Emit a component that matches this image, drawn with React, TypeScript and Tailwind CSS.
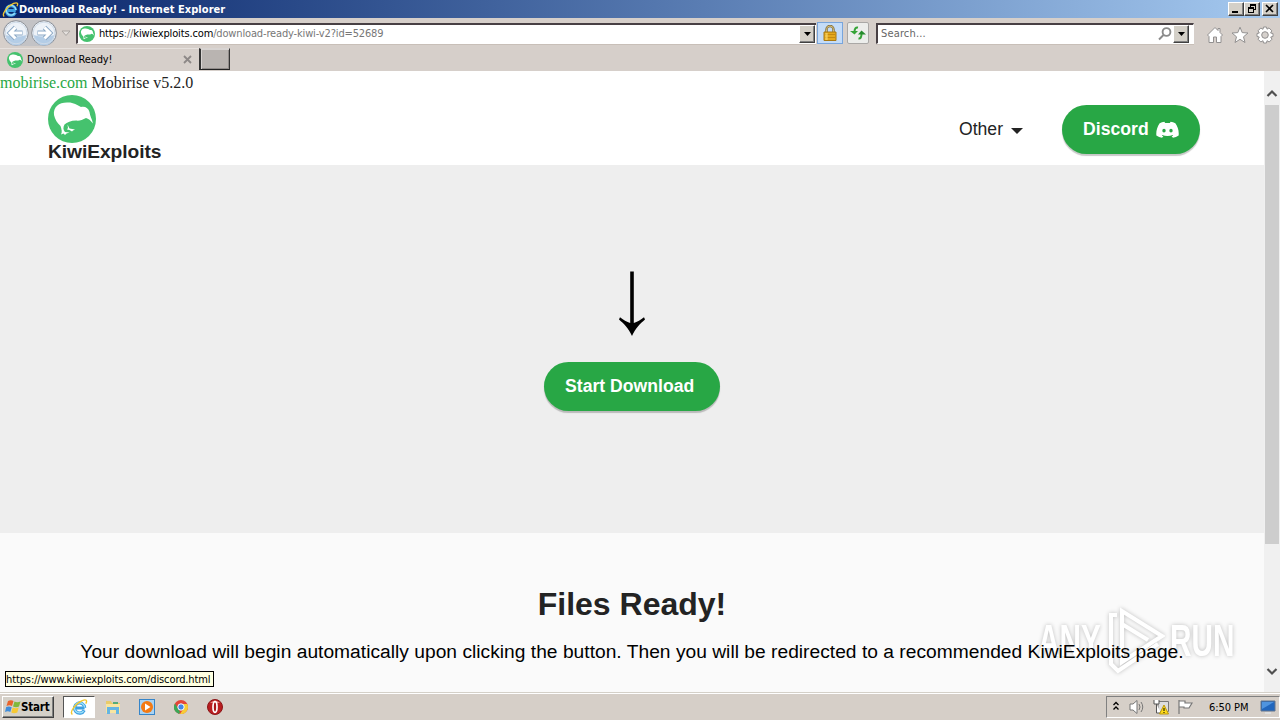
import React from "react";

const ui = "font-['DejaVu_Sans_Condensed','DejaVu_Sans',sans-serif]";

function IeLogo({ className }: { className: string }) {
  return (
    <svg className={className} viewBox="0 0 18 18" fill="none">
      <path d="M14.600 10H5M14.200 12.300A5.100 5.100 0 1 1 14.700 9.800" stroke="#3c9fe0" strokeWidth="3.200" />
      <path d="M13.600 13A5.100 5.100 0 1 1 14.700 9.500" stroke="#9be0fa" strokeWidth="1.400" />
      <path d="M2.400 16.500C-.8 14.200 5.200 5.600 12.300 2.600C16.300 1 17.500 2.500 15.800 5.600" stroke="#f2c62f" strokeWidth="1.400" />
    </svg>
  );
}

function Kiwi({ className }: { className: string }) {
  return (
    <svg className={className} viewBox="0 0 48 48">
      <circle cx="24" cy="24" r="24" fill="#45c26e" />
      <path
        d="M6 20C5 12 11 7.500 19 7.500C25 7 29 10 33 12C37 11 40.500 13 41.500 17C41.800 20.500 44 24 45 28.500C42.500 25.500 40.500 23.500 38 23C34.500 25 31 26 28 25.500C23 25.500 19 27.500 16.500 29.500C15 32 15 35 17 37L21.500 37.500L18.500 38.500L17 40L15.500 38.500L13 39.500C14.500 37 13.500 34 12.500 31C9 28 7 24 6 20Z"
        fill="#fff"
      />
      <path d="M19.500 29.500L21.500 33.500L27 34.500L25 35.500L24 36.500L21.500 35L19 34.500L20 33Z" fill="#fff" />
    </svg>
  );
}

function NavArrow({ back }: { back?: boolean }) {
  return (
    <svg className="h-[26px] w-[26px] shrink-0" viewBox="0 0 26 26">
      <circle cx="13" cy="13" r="12.300" fill="#edf2f8" stroke="#8d9198" />
      <path d="M2.500 15a10.500 10.500 0 0 0 21 0Q13 18 2.500 15" fill="#b4cde6" />
      <circle cx="13" cy="13" r="10.800" fill="none" stroke="#cfdbe8" />
      <g transform={back ? undefined : "rotate(180 13 13)"}>
        <path d="M12.500 7.500L7 13L12.500 18.500M7.500 13H19.500" fill="none" stroke="#8aa7c5" strokeWidth="4.800" />
        <path d="M12.500 7.500L7 13L12.500 18.500M7.500 13H19" fill="none" stroke="#fff" strokeWidth="3" />
      </g>
    </svg>
  );
}

const bevel = "border border-t-white border-l-white border-r-[#404040] border-b-[#404040] bg-[#d4d0c8] shadow-[inset_-1px_-1px_#808080]";

function DropButton() {
  return (
    <span className={`flex h-[18px] w-4 shrink-0 items-center justify-center ${bevel}`}>
      <svg className="h-1 w-[7px]" viewBox="0 0 7 4"><path d="M0 0H7L3.500 4Z" /></svg>
    </span>
  );
}

function TitleBar() {
  return (
    <header className="flex h-[18px] items-center bg-linear-to-r from-[#0a246a] to-[#a6caf0] pl-0.5 pr-0.5">
      <IeLogo className="h-[17px] w-[17px] shrink-0" />
      <h1 className={`${ui} pt-px text-[11px] leading-[17px] font-bold tracking-[0.05px] whitespace-nowrap text-white`}>Download Ready! - Internet Explorer</h1>
      <div className="ml-auto flex">
        <span className={`h-3.5 w-4 ${bevel}`}>
          <svg viewBox="0 0 14 12" className="h-3 w-3.5"><path d="M3 8H9V10H3Z" /></svg>
        </span>
        <span className={`h-3.5 w-4 ${bevel}`}>
          <svg viewBox="0 0 14 12" className="h-3 w-3.5"><path d="M5 1H11V7H9V6H10V3H6V4H5ZM3 4H9V10H3ZM4 6V9H8V6Z" fillRule="evenodd" /></svg>
        </span>
        <span className={`ml-0.5 h-3.5 w-4 ${bevel}`}>
          <svg viewBox="0 0 14 12" className="h-3 w-3.5"><path d="M3 2L10 9M10 2L3 9" stroke="#000" strokeWidth="1.600" /></svg>
        </span>
      </div>
    </header>
  );
}

function AddressBar() {
  return (
    <div className="flex h-[30px] items-center pl-[3px]">
      <div className="flex gap-[2px] rounded-full bg-[#c3c3c6]">
        <NavArrow back />
        <NavArrow />
      </div>
      <svg className="ml-[4px] h-[7px] w-2.5" viewBox="0 0 10 7"><path d="M1 1H9L5 5.500Z" fill="#e4e0dd" stroke="#aaa5a2" /></svg>
      <div className="ml-[5px] flex h-[21px] w-[740px] items-center border-t-2 border-l-2 border-t-[#484044] border-l-[#484044] border-b border-b-white bg-white pl-px shadow-[0_1px_#c8bfb8]">
        <Kiwi className="h-4 w-4" />
        <span className={`${ui} ml-[4px] pt-[2px] text-[11px] tracking-[-0.15px] whitespace-nowrap text-[#777]`}>
          <span className="text-black">https</span>://<span className="text-black">kiwiexploits.com</span>/download-ready-kiwi-v2?id=52689
        </span>
        <span className="ml-auto pr-px"><DropButton /></span>
      </div>
      <span className="ml-px flex h-[22px] w-[26px] items-center justify-center border border-[#78a5dc] bg-[#c4dcf8]">
        <svg className="h-4 w-3.5" viewBox="0 0 14 16">
          <path d="M3.500 8V4.500a3.500 3.500 0 0 1 7 0V8" fill="none" stroke="#806c3b" strokeWidth="2.400" />
          <path d="M3.500 8V4.500a3.500 3.500 0 0 1 7 0V8" fill="none" stroke="#d5bf78" />
          <path d="M1 7H13V15.500H1Z" fill="#e5a91c" stroke="#a87811" />
          <path d="M2 9.500H12M2 12.500H12" stroke="#c58a10" />
          <path d="M3 8V15M4 8V15" stroke="#f9d768" />
        </svg>
      </span>
      <span className="ml-[4px] flex h-[22px] w-[22px] items-center justify-center rounded-xs border border-[#aaa8a6] bg-[#ecedeb]">
        <svg className="h-4 w-4" viewBox="0 0 16 16" fill="none" stroke="#35a437" strokeWidth="2">
          <path d="M8 2.500Q4.500 2 4.500 7" /><path d="M0 6H8L4.500 9.500Z" fill="#35a437" stroke="none" />
          <path d="M8.500 13.500Q11.500 14 11.500 9" /><path d="M8 9.500H16L11.500 5.500Z" fill="#258b2d" stroke="none" />
        </svg>
      </span>
      <div className="ml-[7px] flex h-[21px] w-[318px] items-center border-t-2 border-l-2 border-t-[#484044] border-l-[#484044] border-r border-r-white border-b border-b-white bg-white pr-[4px] pl-[3px] shadow-[0_1px_#c8bfb8]">
        <span className={`${ui} pt-[2px] text-[11px] tracking-[0.15px] text-[#666]`}>Search...</span>
        <svg className="mr-[1px] ml-auto h-3.5 w-3.5" viewBox="0 0 14 14" fill="none" stroke="#8b8b8b" strokeWidth="1.900"><circle cx="8.500" cy="5" r="3.900" /><path d="M5.500 8L1 12.500" /></svg>
        <DropButton />
      </div>
      <div className="mt-[4px] ml-[12px] flex items-center gap-[7px]">
        <svg className="h-[18px] w-[18px]" viewBox="0 0 18 18"><path d="M9 1.500L1.500 9L3 10.500V16.500H7.500V11H10.500V16.500H15V10.500L16.500 9L14 6.500V2.500H12V4.500Z" fill="#fff" stroke="#929090" /></svg>
        <svg className="h-[18px] w-[18px]" viewBox="0 0 18 18"><path d="M9 1.200L11.200 6.600L17 7L12.500 10.800L14 16.500L9 13.300L4 16.500L5.500 10.800L1 7L6.800 6.600Z" fill="#fff" stroke="#929090" /></svg>
        <svg className="h-[18px] w-[18px]" viewBox="0 0 18 18">
          <g fill="#fff" stroke="#929090">
            <path d="M7.500 1H10.500L11 3.200L13 1.900L15.800 4.800L14.600 7L17 7.500V10.500L14.700 11L16 13.200L13.200 16L11 14.700L10.500 17H7.500L7 14.700L4.800 16L2 13.200L3.300 11L1 10.500V7.500L3.300 7L2 4.800L4.800 2L7 3.300Z" />
            <circle cx="9" cy="9" r="3.300" fill="#d6d1cd" />
          </g>
        </svg>
      </div>
    </div>
  );
}

function TabStrip() {
  return (
    <div className="flex h-[23px] border-b border-[#d6cfca]">
      <div className="flex w-[199px] items-center border-t border-t-[#e6e1de] pl-[7px]">
        <Kiwi className="h-4 w-4" />
        <span className={`${ui} ml-1 pt-[2px] text-[11px] tracking-[-0.1px]`}>Download Ready!</span>
        <svg className="mr-[7px] ml-auto h-[9px] w-[9px]" viewBox="0 0 9 9"><path d="M1 1L8 8M8 1L1 8" stroke="#8d8887" strokeWidth="1.800" /></svg>
      </div>
      <div className="h-[22px] w-[31px] border border-t-[#d8d4d2] border-r-[#333] border-b-[#222] border-l-2 border-l-[#333] bg-[#b9b4b1] shadow-[inset_1px_1px_#d8d4d2,inset_-1px_-1px_#918c8a]" />
    </div>
  );
}

function Discord() {
  return (
    <svg className="h-[17px] w-[23px]" viewBox="0 0 24 18" fill="#fff">
      <path fillRule="evenodd" d="M20.300 2.500A17 17 0 0 0 15.300 .8L14.500 2.200A18 18 0 0 0 9.500 2.200L8.700 .8A17 17 0 0 0 3.700 2.500C.9 6.500-.2 11 .2 15.300A18 18 0 0 0 6.200 17.700L7.600 16.200L6 15.300L6.400 14.900C10 16.200 14 16.200 17.600 14.900L18 15.300L16.400 16.200L17.800 17.700A18 18 0 0 0 23.800 15.300C24.300 10.200 22.800 5.900 20.300 2.500ZM8.300 12.100A1.800 1.900 0 1 1 8.300 8.300A1.800 1.900 0 1 1 8.300 12.100ZM15.700 12.100A1.800 1.900 0 1 1 15.700 8.300A1.800 1.900 0 1 1 15.700 12.100Z" />
    </svg>
  );
}

const pill = "flex h-[49px] items-center rounded-full bg-[#28a745] font-bold text-white text-[17.6px] tracking-[0.02px] shadow-[0_2px_1px_rgba(0,0,0,0.22)]";

function WebPage() {
  return (
    <main className="flex min-w-0 flex-1 flex-col bg-[#fafafa]">
      <div className="flex h-[94px] flex-col bg-white">
        <p className="h-6 pt-[2px] font-['Liberation_Serif',serif] text-[16px] leading-5 whitespace-nowrap text-[#232323]">
          <a className="text-[#28a745]">mobirise.com</a> Mobirise v5.2.0
        </p>
        <nav className="flex h-[70px] items-start pr-16 pl-12">
          <div>
            <Kiwi className="h-12 w-12" />
            <div className="text-[19.2px] leading-[17px] font-bold tracking-[-0.05px] text-[#232323]">KiwiExploits</div>
          </div>
          <div className="mt-[10px] ml-auto flex h-[49px] items-center text-[17.6px] text-[#232323]">
            Other
            <svg className="mt-[3px] ml-[8px] h-[6px] w-3" viewBox="0 0 12 6"><path d="M0 0H12L6 6Z" fill="#232323" /></svg>
          </div>
          <button className={`${pill} mt-[10px] ml-[39px] w-[138px] gap-[7px] pl-[21px]`}>Discord<Discord /></button>
        </nav>
      </div>
      <section className="flex h-[368px] flex-col items-center bg-[#eee] pt-[106px]">
        <svg className="h-[66px] w-[28px]" viewBox="0 0 28 66"><path d="M12.200 .5H15.800V52C19 51 23 48.500 26 46.200L27 48.500C22 53 17.500 57 14 65C10.500 57 6 53 1 48.500L2 46.200C5 48.500 9 51 12.200 52Z" /></svg>
        <button className={`${pill} mt-[25px] w-[176px] pl-[21px]`}>Start Download</button>
      </section>
      <section className="flex flex-col items-center pt-[51px] whitespace-nowrap">
        <h2 className="text-[32px] leading-10 font-bold text-[#232323]">Files Ready!</h2>
        <p className="relative z-10 mt-[14px] text-[19.2px] leading-[27px] tracking-[0.02px] text-black">Your download will begin automatically upon clicking the button. Then you will be redirected to a recommended KiwiExploits page.</p>
      </section>
    </main>
  );
}

function Scrollbar() {
  return (
    <aside className="flex w-4 flex-col items-center bg-[#f0f0f0]">
      <div className="flex h-[34px] items-end pb-[7px]"><svg className="h-[9px] w-3" viewBox="0 0 12 9"><path d="M1.500 7L6 2.500L10.500 7" fill="none" stroke="#505050" strokeWidth="2.200" /></svg></div>
      <div className="h-[439px] w-[14px] bg-[#cdcdcd]" />
      <svg className="mt-auto mb-[16px] h-[9px] w-3" viewBox="0 0 12 9"><path d="M1.500 2L6 6.500L10.500 2" fill="none" stroke="#505050" strokeWidth="2.200" /></svg>
    </aside>
  );
}

function Watermark() {
  return (
    <div className="absolute top-[532px] left-[1038px] flex h-[76px] w-[200px] items-center font-['Liberation_Sans',sans-serif] text-[45px] font-bold text-white [filter:drop-shadow(0_0_2px_rgba(0,0,0,.24))]">
      <span className="w-[65px]"><span className="inline-block origin-left scale-x-[.66]">ANY</span></span>
      <svg className="h-[70px] w-[62px] shrink-0" viewBox="0 0 62 70" fill="none" stroke="white" strokeWidth="4">
        <path d="M19 33V5L59 30L19 56V18L45 34" /><path d="M14 9H8V58L15 65L55 38" />
      </svg>
      <span className="ml-[5px] w-[66px]"><span className="inline-block origin-left scale-x-[.66]">RUN</span></span>
    </div>
  );
}

function Taskbar() {
  return (
    <footer className="flex h-7 items-center border-t border-[#d4d0c8] bg-[#d6cfc8] pl-0.5 shadow-[inset_0_1px_#fff]">
      <button className={`mt-px flex h-[22px] w-[52px] items-center pl-[2px] ${bevel}`}>
        <svg className="h-4 w-4 shrink-0" viewBox="0 0 16 16">
          <path d="M3 2Q6 .5 8.500 2L7 7Q4.500 5.500 1.500 7Z" fill="#e9632b" /><path d="M9.500 2.500Q12 4 15.500 2.500L14 7.500Q11 9 8 7.500Z" fill="#80b83b" />
          <path d="M1.200 8Q4 6.700 6.700 8.300L5.300 13Q3 11.500 0 13Z" fill="#3f8cda" /><path d="M7.700 8.500Q10.500 10 13.700 8.500L12.300 13.500Q9 15 6.300 13.500Z" fill="#f7c934" />
        </svg>
        <span className={`${ui} pt-px text-[11.500px] font-bold tracking-[-0.2px]`}>Start</span>
      </button>
      <span className="mt-px ml-[9px] flex h-[22px] w-8 items-center justify-center border border-t-[#555] border-l-[#555] border-r-white border-b-white bg-white"><IeLogo className="h-[18px] w-[18px]" /></span>
      <svg className="ml-[10px] h-4 w-4" viewBox="0 0 16 16"><path d="M1 2H6L7 4H15V12H1Z" fill="#e9cb6a" /><path d="M1 5H15V14H1Z" fill="#f8e5a0" /><path d="M2 8H14V15H11V11H5V15H2Z" fill="#65b5e2" /><path d="M8 3H13V5H8Z" fill="#55ab79" /></svg>
      <svg className="ml-[18px] h-4 w-4" viewBox="0 0 16 16"><rect x=".5" y=".5" width="15" height="15" fill="#a9d3f3" stroke="#3685c9" /><circle cx="8" cy="8" r="6" fill="#f47a13" /><path d="M6 4.500L11.500 8L6 11.500Z" fill="#fff" /></svg>
      <svg className="ml-[19px] h-[14px] w-[14px]" viewBox="0 0 14 14"><circle cx="7" cy="7" r="7" fill="#e44538" /><path d="M1 3.500L6 12L5 14A7 7 0 0 1 1 3.500" fill="#3aa757" /><path d="M7 4H13.200A7 7 0 0 1 6 14L10 8Z" fill="#f7cd35" /><circle cx="7" cy="7" r="3.200" fill="#4386e8" stroke="white" /></svg>
      <svg className="ml-[19px] h-[16px] w-4" viewBox="0 0 16 16"><circle cx="8" cy="8" r="7.500" fill="#b91d20" stroke="#8b1517" /><path d="M3 4Q8-1 13 4Z" fill="#e98580" /><ellipse cx="8" cy="8" rx="2" ry="5.300" fill="#a91518" stroke="#fff" strokeWidth="1.700" /></svg>
      <div className="mt-px ml-auto flex h-[22px] w-[174px] items-center border border-t-[#808080] border-l-[#808080] border-r-white border-b-white pl-[6px]">
        <svg className="mb-[2px] h-[10px] w-[6px]" viewBox="0 0 6 10" fill="none" stroke="#000" strokeWidth="1.300"><path d="M.5 4L3 1.500L5.500 4M.5 8.500L3 6L5.500 8.500" /></svg>
        <svg className="ml-[10px] h-4 w-4" viewBox="0 0 16 16" fill="none" stroke="#777"><path d="M1 5H4L8 1.500V14.500L4 11H1Z" fill="#fff" /><path d="M10 5Q12 8 10 11M12 3Q15.500 8 12 13" /></svg>
        <svg className="ml-[8px] h-4 w-4" viewBox="0 0 16 16"><path d="M5 2.500H15.500V12.500H5Z" fill="#ddd" stroke="#777" /><path d="M1 1V5H6V1M3.500 5V14H8" fill="#fff" stroke="#555" /><path d="M11 6L15.500 15H6.500Z" fill="#ffdc19" stroke="#ba960c" /><path d="M11 9V12M11 13V14" stroke="#000" /></svg>
        <svg className="ml-[8px] h-4 w-4" viewBox="0 0 16 16"><path d="M2 15V1M2 2H8V4H15L12 9H7V8H2" fill="#fff" stroke="#777" strokeWidth="1.200" /></svg>
        <span className={`${ui} ml-[16px] w-[44px] pt-[2px] text-[11px] tracking-[-0.05px] whitespace-nowrap`}>6:50 PM</span>
        <svg className="ml-[7px] h-[14px] w-4" viewBox="0 0 16 14"><path d="M1 1H15V11H1Z" fill="#2166bd" stroke="#63758c" /><path d="M2 2H14L2 9Z" fill="#4f94df" /><path d="M5 12H11V14H5Z" fill="#dedede" /></svg>
      </div>
    </footer>
  );
}

export default function App() {
  return (
    <div className="flex h-[720px] w-[1280px] flex-col overflow-hidden bg-[#d6cfca] font-['Liberation_Sans',sans-serif]">
      <TitleBar />
      <AddressBar />
      <TabStrip />
      <div className="relative flex h-[621px] shrink-0">
        <WebPage />
        <Scrollbar />
        <Watermark />
        <div className={`${ui} absolute top-[600px] left-[5px] flex h-[16px] w-[209px] items-center border border-black bg-[#ffffe1] pt-[2px] text-[11px] tracking-[-0.11px] whitespace-nowrap`}>https://www.kiwiexploits.com/discord.html</div>
      </div>
      <Taskbar />
    </div>
  );
}
